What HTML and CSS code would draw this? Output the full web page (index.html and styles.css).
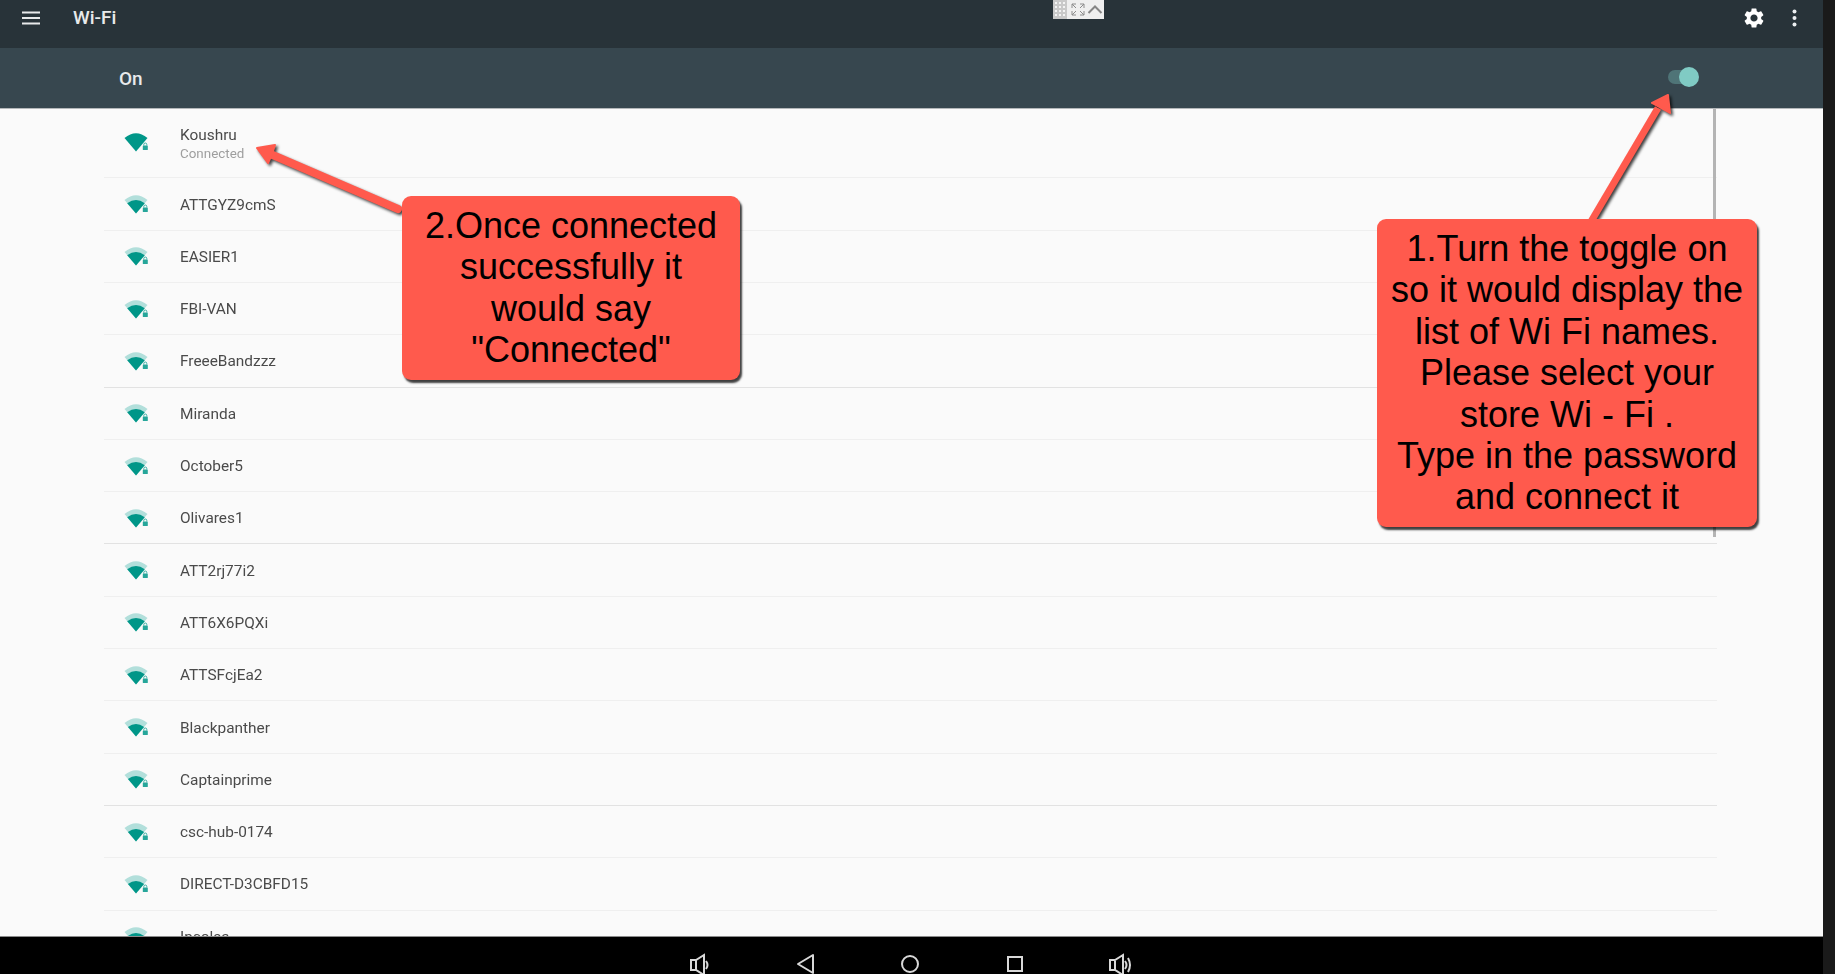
FILE: index.html
```html
<!DOCTYPE html>
<html lang="en">
<head>
    <meta charset="UTF-8">
    <title>Wi-Fi</title>
    <link rel="stylesheet" href="styles.css">
</head>
<body>
    <!-- shared wifi icons -->
    <svg class="defs" width="0" height="0">
        <symbol id="lock" viewBox="0 0 24 20">
            <path d="M19.800 13.500v-1a1.500 1.500 0 0 1 3 0v1" fill="none" stroke="#26a69a" stroke-width=".9"/>
            <rect x="18.800" y="13.500" width="5" height="4.500" rx=".6" fill="#26a69a"/>
        </symbol>
        <symbol id="wifi-4" viewBox="0 0 24 20">
            <path d="M12 19.500L.5 6Q12-3.500 23.500 6z" fill="#009688"/>
            <use href="#lock"/>
        </symbol>
        <symbol id="wifi-3" viewBox="0 0 24 20">
            <path d="M12 19.500L.5 6Q12-3.500 23.500 6z" fill="#b2dfdb"/>
            <path d="M12 19.500L3.200 9.200Q12 2.600 20.800 9.200z" fill="#009688"/>
            <use href="#lock"/>
        </symbol>
        <symbol id="wifi-2" viewBox="0 0 24 20">
            <path d="M12 19.500L.5 6Q12-3.500 23.500 6z" fill="#b2dfdb"/>
            <path d="M12 19.500L3.900 10.100Q12 3.900 20.100 10.100z" fill="#009688"/>
            <use href="#lock"/>
        </symbol>
    </svg>

    <div class="screen">
        <header class="topbar">
            <svg class="menu-icon" width="18" height="14" viewBox="0 0 18 14">
                <path d="M0 1.500h18M0 7h18M0 12.500h18" stroke="#e8eaeb" stroke-width="2"/>
            </svg>
            <span class="topbar-title">Wi-Fi</span>
            <svg class="gear-icon" width="24" height="24" viewBox="0 0 24 24">
                <path fill="#fff" d="M19.14 12.94c.04-.3.06-.61.06-.94 0-.32-.02-.64-.07-.94l2.03-1.58a.49.49 0 0 0 .12-.61l-1.92-3.32a.488.488 0 0 0-.59-.22l-2.39.96c-.5-.38-1.03-.7-1.62-.94l-.36-2.54a.484.484 0 0 0-.48-.41h-3.84c-.24 0-.43.17-.47.41l-.36 2.54c-.59.24-1.13.57-1.62.94l-2.39-.96c-.22-.08-.47 0-.59.22L2.74 8.87c-.12.21-.08.47.12.61l2.03 1.58c-.05.3-.09.63-.09.94s.02.64.07.94l-2.03 1.58a.49.49 0 0 0-.12.61l1.92 3.32c.12.22.37.29.59.22l2.39-.96c.5.38 1.03.7 1.62.94l.36 2.54c.05.24.24.41.48.41h3.84c.24 0 .44-.17.47-.41l.36-2.54c.59-.24 1.13-.56 1.62-.94l2.39.96c.22.08.47 0 .59-.22l1.92-3.32c.12-.22.07-.47-.12-.61l-2.01-1.58zM12 15.6c-1.98 0-3.6-1.62-3.6-3.6s1.62-3.6 3.6-3.6 3.6 1.62 3.6 3.6-1.62 3.6-3.6 3.6z"/>
            </svg>
            <svg class="more-icon" width="5" height="18" viewBox="0 0 5 18">
                <circle cx="2.500" cy="2.500" r="2" fill="#eceff1"/>
                <circle cx="2.500" cy="9" r="2" fill="#eceff1"/>
                <circle cx="2.500" cy="15.500" r="2" fill="#eceff1"/>
            </svg>
        </header>

        <!-- little window tray that sits over the top bar -->
        <svg class="tray" width="51" height="19" viewBox="0 0 51 19">
            <rect width="51" height="19" fill="#efefef"/>
            <rect width="14" height="19" fill="#c9c9c9"/>
            <path d="M2 2h2v2H2zM6 2h2v2H6zM10 2h2v2h-2zM2 6h2v2H2zM6 6h2v2H6zM10 6h2v2h-2zM2 10h2v2H2zM6 10h2v2H6zM10 10h2v2h-2zM2 14h2v2H2zM6 14h2v2H6zM10 14h2v2h-2z" fill="#f4f4f4"/>
            <path d="M19 8V4h4M31 8V4h-4M19 11v4h4M31 11v4h-4M19 4l4 4M31 4l-4 4M19 15l4-4M31 15l-4-4" fill="none" stroke="#8c8c8c" stroke-width="1"/>
            <path d="M35.500 13l6.500-6.500 6.500 6.500" fill="none" stroke="#868686" stroke-width="2"/>
        </svg>

        <div class="subbar">
            <span class="subbar-label">On</span>
            <div class="toggle">
                <span class="toggle-track"></span>
                <span class="toggle-thumb"></span>
            </div>
        </div>

        <div class="wifi-list">
            <div class="row row-connected">
                <svg class="wifi-icon"><use href="#wifi-4"/></svg>
                <div>
                    <div class="row-name">Koushru</div>
                    <div class="row-status">Connected</div>
                </div>
            </div>
            <div class="row"><svg class="wifi-icon"><use href="#wifi-3"/></svg><div class="row-name">ATTGYZ9cmS</div></div>
            <div class="row"><svg class="wifi-icon"><use href="#wifi-3"/></svg><div class="row-name">EASIER1</div></div>
            <div class="row"><svg class="wifi-icon"><use href="#wifi-3"/></svg><div class="row-name">FBI-VAN</div></div>
            <div class="row row-strong"><svg class="wifi-icon"><use href="#wifi-3"/></svg><div class="row-name">FreeeBandzzz</div></div>
            <div class="row"><svg class="wifi-icon"><use href="#wifi-3"/></svg><div class="row-name">Miranda</div></div>
            <div class="row"><svg class="wifi-icon"><use href="#wifi-3"/></svg><div class="row-name">October5</div></div>
            <div class="row row-strong"><svg class="wifi-icon"><use href="#wifi-3"/></svg><div class="row-name">Olivares1</div></div>
            <div class="row"><svg class="wifi-icon"><use href="#wifi-3"/></svg><div class="row-name">ATT2rj77i2</div></div>
            <div class="row"><svg class="wifi-icon"><use href="#wifi-3"/></svg><div class="row-name">ATT6X6PQXi</div></div>
            <div class="row"><svg class="wifi-icon"><use href="#wifi-3"/></svg><div class="row-name">ATTSFcjEa2</div></div>
            <div class="row"><svg class="wifi-icon"><use href="#wifi-2"/></svg><div class="row-name">Blackpanther</div></div>
            <div class="row row-strong"><svg class="wifi-icon"><use href="#wifi-2"/></svg><div class="row-name">Captainprime</div></div>
            <div class="row"><svg class="wifi-icon"><use href="#wifi-2"/></svg><div class="row-name">csc-hub-0174</div></div>
            <div class="row"><svg class="wifi-icon"><use href="#wifi-2"/></svg><div class="row-name">DIRECT-D3CBFD15</div></div>
            <div class="row"><svg class="wifi-icon"><use href="#wifi-2"/></svg><div class="row-name">Incolsa</div></div>
            <div class="scroll-thumb"></div>
        </div>

        <nav class="navbar">
            <svg class="nav-icon" width="24" height="24" viewBox="0 0 24 24">
                <path d="M3 7h5l8-5v20l-8-5H3zM8 7v10M18 8q3 4 0 8" fill="none" stroke="#d8d8d8" stroke-width="2"/>
            </svg>
            <svg class="nav-icon" width="24" height="24" viewBox="0 0 24 24">
                <path d="M20 2v18L5 11z" fill="none" stroke="#d8d8d8" stroke-width="2" stroke-linejoin="round"/>
            </svg>
            <svg class="nav-icon" width="24" height="24" viewBox="0 0 24 24">
                <circle cx="12" cy="11" r="8" fill="none" stroke="#d8d8d8" stroke-width="2"/>
            </svg>
            <svg class="nav-icon" width="24" height="24" viewBox="0 0 24 24">
                <rect x="5" y="4" width="14" height="14" fill="none" stroke="#d8d8d8" stroke-width="2"/>
            </svg>
            <svg class="nav-icon" width="24" height="24" viewBox="0 0 24 24">
                <path d="M2 7h5l8-5v20l-8-5H2zM7 7v10M17 8q3 4 0 8M20 5q4 7 0 14" fill="none" stroke="#d8d8d8" stroke-width="2"/>
            </svg>
        </nav>

        <!-- annotations -->
        <svg class="arrows" width="1823" height="974" viewBox="0 0 1823 974">
            <path d="M398 209L268 153" stroke="#ff5a4d" stroke-width="8" stroke-linecap="round"/>
            <path d="M257 148L275 145L272 154L268 163z" fill="#ff5a4d" stroke="#ff5a4d" stroke-width="2" stroke-linejoin="round"/>
            <path d="M1589 225L1658 108" stroke="#ff5a4d" stroke-width="7"/>
            <path d="M1668 95L1652 103L1661 108L1670 113z" fill="#ff5a4d" stroke="#ff5a4d" stroke-width="2" stroke-linejoin="round"/>
        </svg>
        <div class="callout callout-connected">2.Once connected<br>successfully it<br>would say<br>"Connected"</div>
        <div class="callout callout-toggle">1.Turn the toggle on<br>so it would display the<br>list of Wi Fi names.<br>Please select your<br>store Wi - Fi .<br>Type in the password<br>and connect it</div>
    </div>
</body>
</html>
```

FILE: styles.css
```css
* {
    box-sizing: border-box;
}

html, body {
    height: 100%;
}

body {
    margin: 0;
    background-color: #1a1a1a;
    font-family: Roboto, sans-serif;
    overflow: hidden;
}

.defs {
    display: block;
    height: 0;
}

.screen {
    position: relative;
    display: flex;
    flex-direction: column;
    width: 1823px;
    height: 974px;
    overflow: hidden;
}

/* top bar */

.topbar {
    display: flex;
    align-items: center;
    flex: none;
    height: 48px;
    padding: 0 26px 13px 22px;
    background-color: #283339;
    color: #e8eaeb;
}

.menu-icon {
    flex: none;
}

.topbar-title {
    margin-left: 33px;
    font-size: 19px;
    font-weight: 500;
}

.gear-icon {
    margin-left: auto;
}

.more-icon {
    margin-left: 26px;
}

.tray {
    position: absolute;
    top: 0;
    left: 1053px;
}

.subbar {
    display: flex;
    align-items: center;
    justify-content: space-between;
    flex: none;
    height: 61px;
    padding: 0 124px 0 119px;
    background-color: #37474f;
    border-bottom: 1px solid #b4b8ba;
}

.subbar-label {
    font-size: 19px;
    font-weight: 500;
    color: #e8eaeb;
}

.toggle {
    display: flex;
    align-items: center;
    margin-bottom: 2px;
}

.toggle-track {
    width: 24px;
    height: 14px;
    border-radius: 7px;
    background-color: #4f7477;
}

.toggle-thumb {
    width: 20px;
    height: 20px;
    margin-left: -13px;
    border-radius: 50%;
    background-color: #80cbc4;
}

/* network list */

.wifi-list {
    position: relative;
    flex: 1;
    min-height: 0;
    padding: 0 106px 0 104px;
    background-color: #fafafa;
    overflow: hidden;
}

.row {
    display: flex;
    align-items: center;
    height: 52.3px;
    padding-left: 20px;
    border-bottom: 1px solid #efefef;
}

.row-connected {
    height: 69.4px;
}

.row-connected .wifi-icon {
    margin-top: -2px;
}

.row-strong {
    border-bottom-color: #e2e2e2;
}

.wifi-icon {
    flex: none;
    width: 24px;
    height: 20px;
    margin-right: 32px;
    filter: blur(.4px);
}

.row-name {
    padding-top: 1px;
    font-size: 15.4px;
    color: #4a4a4a;
    filter: blur(.35px);
}

.row-status {
    margin-top: 2px;
    font-size: 13.4px;
    color: #9e9e9e;
    filter: blur(.35px);
}

.scroll-thumb {
    position: absolute;
    top: 0;
    right: 107px;
    width: 3px;
    height: 428px;
    background-color: #b4b4b4;
}

/* bottom navigation */

.navbar {
    display: flex;
    justify-content: center;
    align-items: flex-start;
    gap: 81px;
    flex: none;
    height: 38px;
    padding: 16px 3px 0 0;
    background-color: #000;
    border-top: 1px solid #8a8a8a;
}

/* annotations */

.arrows {
    position: absolute;
    top: 0;
    left: 0;
    filter: drop-shadow(2px 2px 1.5px rgba(0, 0, 0, .75));
}

.callout {
    position: absolute;
    padding: 9px 0 0;
    border-radius: 9px;
    background-color: #ff5a4d;
    box-shadow: 2px 3px 2px rgba(0, 0, 0, .75);
    color: #000;
    font-family: "Liberation Sans", Arial, sans-serif;
    font-size: 36px;
    line-height: 41.4px;
    text-align: center;
}

.callout-connected {
    top: 196px;
    left: 402px;
    width: 338px;
    height: 184px;
}

.callout-toggle {
    top: 219px;
    left: 1377px;
    width: 380px;
    height: 308px;
}
```
